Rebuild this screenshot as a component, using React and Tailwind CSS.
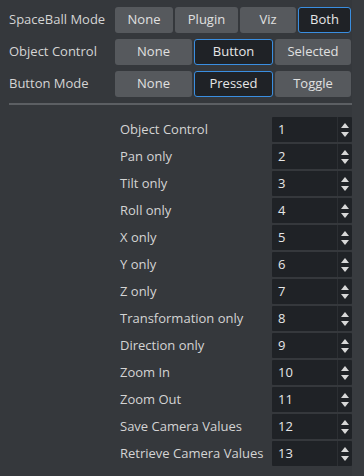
import React from "react";

const font = { fontFamily: '"Open Sans", "Noto Sans", sans-serif' };

function Seg({ items, active, widths }) {
  return (
    <div className="flex gap-[2px]">
      {items.map((it, i) => (
        <div
          key={it}
          className={
            "h-[26px] flex items-center justify-center rounded-[3px] text-[13px] " +
            (i === active
              ? "bg-[#1f2226] border border-[#3a8ee0] text-[#e6e6e6]"
              : "bg-[#56595d] text-[#e0e0e0]")
          }
          style={{ width: widths[i] }}
        >
          {it}
        </div>
      ))}
    </div>
  );
}

function Spin({ value }) {
  return (
    <div className="w-[80px] h-[25px] bg-[#1f2226] flex rounded-[1px]">
      <div className="flex-1 flex items-center pl-[6px] text-[13px] text-[#e6e6e6]">{value}</div>
      <div className="w-[15px] border-l border-[#2c2f33] flex flex-col items-center justify-center gap-[4px]">
        <svg width="8" height="5" viewBox="0 0 8 5"><path d="M4 0 L8 5 L0 5 Z" fill="#d8d8d8" /></svg>
        <svg width="8" height="5" viewBox="0 0 8 5"><path d="M0 0 L8 0 L4 5 Z" fill="#d8d8d8" /></svg>
      </div>
    </div>
  );
}

const rows = [
  "Object Control",
  "Pan only",
  "Tilt only",
  "Roll only",
  "X only",
  "Y only",
  "Z only",
  "Transformation only",
  "Direction only",
  "Zoom In",
  "Zoom Out",
  "Save Camera Values",
  "Retrieve Camera Values",
];

export default function App() {
  return (
    <div className="w-[364px] h-[476px] bg-[#35383c] flex overflow-hidden" style={font}>
      <div className="w-[352px] flex flex-col pt-[7px]">
        <div className="flex flex-col gap-[6px]">
          <div className="flex items-center">
            <div className="w-[115px] pl-[9px] text-[13px] text-[#d4d4d4]">SpaceBall Mode</div>
            <Seg items={["None", "Plugin", "Viz", "Both"]} active={3} widths={[58, 63, 56, 53]} />
          </div>
          <div className="flex items-center">
            <div className="w-[115px] pl-[9px] text-[13px] text-[#d4d4d4]">Object Control</div>
            <Seg items={["None", "Button", "Selected"]} active={1} widths={[77, 79, 76]} />
          </div>
          <div className="flex items-center">
            <div className="w-[115px] pl-[9px] text-[13px] text-[#d4d4d4]">Button Mode</div>
            <Seg items={["None", "Pressed", "Toggle"]} active={1} widths={[77, 79, 76]} />
          </div>
        </div>
        <div className="ml-[9px] mt-[6px] h-[2px] bg-[#5c5f63]" />
        <div className="flex flex-col gap-[2px] mt-[12px]">
          {rows.map((r, i) => (
            <div key={r} className="flex items-center">
              <div className="w-[272px] pl-[120px] text-[13px] text-[#d4d4d4] whitespace-nowrap">{r}</div>
              <Spin value={i + 1} />
            </div>
          ))}
        </div>
      </div>
      <div className="flex-1 bg-[#383b3f]" />
    </div>
  );
}
